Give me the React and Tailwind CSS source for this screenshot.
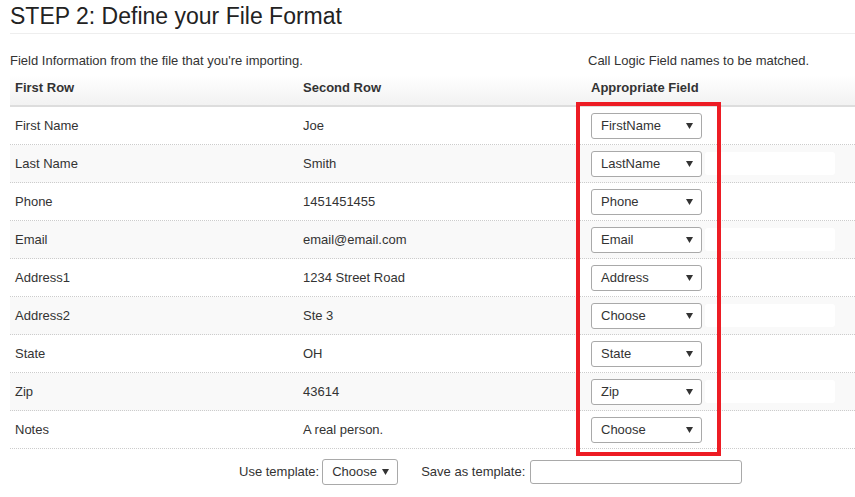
import React from "react";

const rows = [
  ["First Name", "Joe", "FirstName"],
  ["Last Name", "Smith", "LastName"],
  ["Phone", "1451451455", "Phone"],
  ["Email", "email@email.com", "Email"],
  ["Address1", "1234 Street Road", "Address"],
  ["Address2", "Ste 3", "Choose"],
  ["State", "OH", "State"],
  ["Zip", "43614", "Zip"],
  ["Notes", "A real person.", "Choose"],
];

function Arrow() {
  return (
    <svg width="7" height="6" viewBox="0 0 7 6" className="shrink-0">
      <path d="M0 0 H7 L3.5 6 Z" fill="#333" />
    </svg>
  );
}

function FakeSelect({ value, width }) {
  return (
    <div
      className={`flex items-center justify-between h-[26px] ${width} pl-[9px] pr-[8px] border border-[#a9a9a9] rounded-[3px] bg-white text-[13px] text-[#333]`}
    >
      <span>{value}</span>
      <Arrow />
    </div>
  );
}

export default function App() {
  return (
    <div
      className="relative w-[855px] h-[497px] bg-white text-[#333] overflow-hidden"
      style={{ fontFamily: '"Liberation Sans", Arial, sans-serif' }}
    >
      {/* title */}
      <div className="ml-[10px] h-[34px] pt-[2px] border-b border-[#eee]">
        <h2 className="text-[23px] leading-[28px] text-[#222]">
          STEP 2: Define your File Format
        </h2>
      </div>

      {/* subtitles */}
      <div className="ml-[10px] mt-[19px] grid grid-cols-[578px_1fr] text-[13px] leading-[15px]">
        <span>Field Information from the file that you're importing.</span>
        <span>Call Logic Field names to be matched.</span>
      </div>

      {/* table */}
      <div className="ml-[10px] mt-[7px]">
        <div className="grid grid-cols-[288px_288px_1fr] h-[32px] pt-[5px] border-b-2 border-[#ddd] bg-gradient-to-b from-white to-[#f2f2f2] text-[13px] leading-[15px] font-bold">
          <div className="pl-[5px]">First Row</div>
          <div className="pl-[5px]">Second Row</div>
          <div className="pl-[5px]">Appropriate Field</div>
        </div>

        {rows.map(([a, b, sel], i) => (
          <div
            key={a}
            className={`grid grid-cols-[288px_288px_1fr] items-center h-[38px] border-b border-dotted border-[#ccc] text-[13px] ${
              i % 2 === 1 ? "bg-[#f9f9f9]" : "bg-white"
            }`}
          >
            <div className="pl-[5px]">{a}</div>
            <div className="pl-[5px]">{b}</div>
            <div className="pl-[5px] flex items-center">
              <FakeSelect value={sel} width="w-[111px]" />
              <div className="ml-[3px] w-[130px] h-[23px] rounded-[3px] bg-white"></div>
            </div>
          </div>
        ))}
      </div>

      {/* footer */}
      <div className="flex items-center mt-[10px] pl-[239px] text-[13px]">
        <span>Use template:</span>
        <div className="ml-[3px]">
          <FakeSelect value="Choose" width="w-[76px]" />
        </div>
        <span className="ml-[23px]">Save as template:</span>
        <div className="ml-[5px] w-[212px] h-[24px] border border-[#a9a9a9] rounded-[3px] bg-white"></div>
      </div>

      {/* red highlight overlay */}
      <div className="absolute left-[576px] top-[102px] w-[145px] h-[354px] border-4 border-[#ed1c24] pointer-events-none"></div>
    </div>
  );
}
